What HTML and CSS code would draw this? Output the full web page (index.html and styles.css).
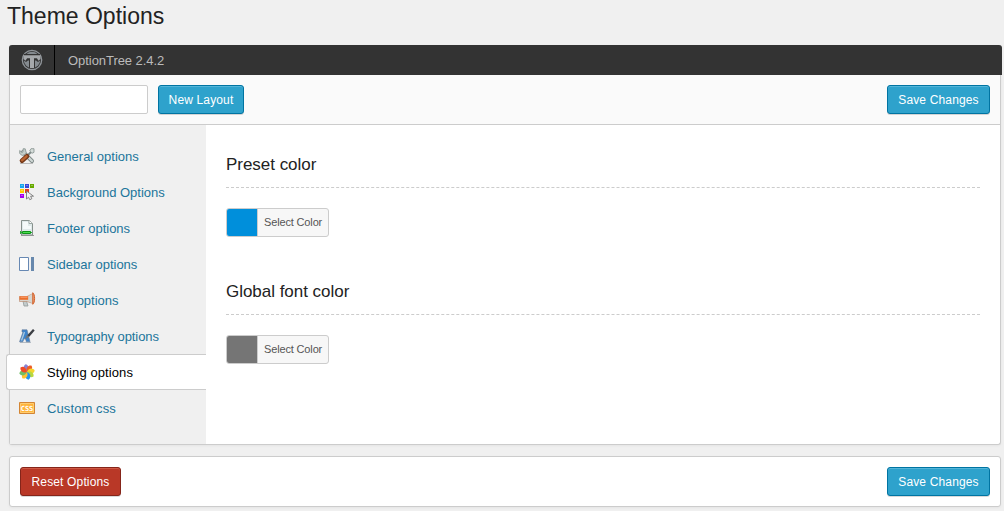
FILE: index.html
```html
<!DOCTYPE html>
<html lang="en">
<head>
<meta charset="utf-8">
<title>Theme Options</title>
<link rel="stylesheet" href="styles.css">
</head>
<body>
<h1 class="page-title">Theme Options</h1>
<form class="panel main-panel">
  <header class="brand-bar">
    <div class="brand-logo">
      <svg width="22" height="22" viewBox="0 0 22 22"><circle cx="11" cy="11" r="9.700" fill="#333" stroke="#8f9499" stroke-width="1.300"/><circle cx="11" cy="11" r="8.200" fill="#858b90"/><path d="M3 5h16v6.500l-2 1.500-2-1.500h-1V19H8v-7.500H7L5 13l-2-1.500z" fill="#333"/><path d="M2.500 6.300h17v3.700l-2 1.700-1.600-2.400H13V19H9V9.300H6.100l-1.600 2.400-2-1.700z" fill="#a5a8ab"/></svg>
    </div>
    <span class="brand-name">OptionTree 2.4.2</span>
  </header>
  <div class="toolbar">
    <input class="layout-input" type="text" aria-label="Layout name">
    <button class="btn btn-primary btn-layout" type="button">New Layout</button>
    <button class="btn btn-primary btn-save" type="button">Save Changes</button>
  </div>
  <div class="panel-body">
    <nav class="tabs">
      <a class="tab"><svg class="icon" viewBox="0 0 16 16"><path d="M1 15.500h13" stroke="#bbb" stroke-width="1"/><path d="M4 4l9 9" stroke="#7e8987" stroke-width="4" stroke-linecap="round"/><path d="M4 4l9 9" stroke="#d0d8d6" stroke-width="2.200" stroke-linecap="round"/><path d="M.7 2.500v3l2.500 2 3-1 1-2-1-3.700H4v3L3 4.500z" fill="#c4ceca" stroke="#84918e" stroke-width=".8"/><path d="M8 8l5-5" stroke="#7c8785" stroke-width="1.800"/><path d="M12 .7l3 0v3.600l-2 1-2.300-2.300z" fill="#d5dcd9" stroke="#84918e" stroke-width=".8"/><path d="M3 12.700l5-4.500" stroke="#753818" stroke-width="4.600" stroke-linecap="round"/><path d="M3 12.300l4.500-4" stroke="#ba6532" stroke-width="2.400" stroke-linecap="round"/></svg><span>General options</span></a>
      <a class="tab"><svg class="icon" viewBox="0 0 16 16"><path d="M1 0h4v4H1z" fill="#16a6ed"/><path d="M6 0h4v4H6z" fill="#3648d8"/><path d="M11 0h4v4h-4z" fill="#67a900"/><path d="M1 5h4v4H1z" fill="#fc0"/><path d="M6 5h4v4H6z" fill="#e53920"/><path d="M1 10h4v4H1z" fill="#a800ed"/><path d="M2 1h2v1H2z M7 1h2v1H7z M12 1h2v1h-2z M2 6h2v1H2z M2 11h2v1H2z" fill="#fff" opacity=".3"/><path d="M7.500 7v8l2-1.800 1.300 2.500 2-1-1.200-2.500H14.500z" fill="#f2f2f2" stroke="#777" stroke-width=".9"/></svg><span>Background Options</span></a>
      <a class="tab"><svg class="icon" viewBox="0 0 16 16"><path d="M2 15.500h13" stroke="#999"/><path d="M2.500.5h8l3 3V15h-11z" fill="#e0eaea" stroke="#87918d"/><path d="M4 9V2h5v4h3v3z" fill="#f5fafa"/><path d="M10 .5v3h3.500" fill="#fff" stroke="#9ba7a3"/><path d="M3.500 11.500h8v2h-8z" fill="#49df4f" stroke="#109419"/><path d="M4 12.500h7" stroke="#49df4f"/><path d="M1.500 11v3M1.500 12.500h1.500M12 12.500h1" stroke="#2cb035"/></svg><span>Footer options</span></a>
      <a class="tab"><svg class="icon" viewBox="0 0 16 16"><path d="M.5 1.500h9v13h-9z" fill="#fff" stroke="#6788b3"/><path d="M12 1h3v14h-3z" fill="#6788ad"/></svg><span>Sidebar options</span></a>
      <a class="tab"><svg class="icon" viewBox="0 0 16 16"><path d="M4 9h3.500l1.500 5H5z" fill="#c4cbcb" stroke="#929b9b" stroke-width=".8"/><path d="M.5 4.500H8l6-3v10L8 9.500H.5z" fill="#d9d5cf" stroke="#b78163" stroke-width=".6"/><path d="M.5 4.200H9.500v3.600H.5z" fill="#ec6f2b"/><path d="M1.500 5.200h7" stroke="#f9a375"/><path d="M9.300 4.200L13.500 2v9L9.300 9z" fill="#d5d6d1"/><path d="M13.800.7c2.400 1.700 2.400 10 0 11.600z" fill="#e8a078" stroke="#d4622b"/></svg><span>Blog options</span></a>
      <a class="tab"><svg class="icon" viewBox="0 0 16 16"><path d="M1 14.500h11" stroke="#b5bdc5"/><path d="M3 1.800h5l3 12H7.300l-.7-3H5l-1.200 3H.5L4 4H3z" fill="#3c83cb" stroke="#647a96" stroke-width=".6"/><path d="M2.500 12.500L5.500 4" stroke="#a9c9e0" stroke-width="1.300"/><path d="M7.500 9.500l1.500-3L14 1l1.700 1.500-5.200 6z" fill="#3c3f44"/><path d="M6 11.500l1.700-4.500 2.800 1.700z" fill="#6c747c"/></svg><span class="tight">Typography options</span></a>
      <a class="tab tab-active"><svg class="icon" viewBox="0 0 16 16"><path d="M8 8C3.500 6 4 2 6.500.3 9.800 1 10.500 4 8 8z" fill="#8983d2"/><path d="M8 8C3.500 6 4 2 6.500.3 9.800 1 10.500 4 8 8z" fill="#ed5e26" transform="rotate(45 8 8)"/><path d="M8 8C3.500 6 4 2 6.500.3 9.800 1 10.500 4 8 8z" fill="#f5d52e" transform="rotate(90 8 8)"/><path d="M8 8C3.500 6 4 2 6.500.3 9.800 1 10.500 4 8 8z" fill="#b9d83d" transform="rotate(135 8 8)"/><path d="M8 8C3.500 6 4 2 6.500.3 9.800 1 10.500 4 8 8z" fill="#2796eb" transform="rotate(180 8 8)"/><path d="M8 8C3.500 6 4 2 6.500.3 9.800 1 10.500 4 8 8z" fill="#ffc32e" transform="rotate(225 8 8)"/><path d="M8 8C3.500 6 4 2 6.500.3 9.800 1 10.500 4 8 8z" fill="#72bf68" transform="rotate(270 8 8)"/><path d="M8 8C3.500 6 4 2 6.500.3 9.800 1 10.500 4 8 8z" fill="#ee4c28" transform="rotate(315 8 8)"/></svg><span class="loose">Styling options</span></a>
      <a class="tab"><svg class="icon" viewBox="0 0 16 16"><path d="M.5 2.500h15v11H.5z" fill="#ffb43b" stroke="#d38534"/><path d="M1.500 3.500h13v9h-13z" fill="none" stroke="#ffcd70"/><text class="css-label" x="8" y="10.800" text-anchor="middle">CSS</text></svg><span class="loose">Custom css</span></a>
    </nav>
    <main class="settings">
      <section class="setting">
        <h2 class="setting-title">Preset color</h2>
        <button class="color-picker" type="button"><span class="swatch swatch-blue"></span><span class="picker-label">Select Color</span></button>
      </section>
      <section class="setting">
        <h2 class="setting-title">Global font color</h2>
        <button class="color-picker" type="button"><span class="swatch swatch-gray"></span><span class="picker-label">Select Color</span></button>
      </section>
    </main>
  </div>
</form>
<footer class="panel footer-panel">
  <button class="btn btn-danger" type="button">Reset Options</button>
  <button class="btn btn-primary btn-save" type="button">Save Changes</button>
</footer>
</body>
</html>
```
FILE: styles.css
```css
* {
  box-sizing: border-box;
}

body {
  margin: 0;
  padding: 0 3px 0 9px;
  height: 511px;
  overflow: hidden;
  background: #f0f0f0;
  font-family: "Liberation Sans", Arial, sans-serif;
  font-size: 13px;
  color: #222;
}

.page-title {
  height: 45px;
  margin: 0 0 0 -2px;
  padding-top: 2px;
  font-size: 23px;
  font-weight: 400;
  line-height: 29px;
}

.panel {
  width: 992px;
  border: 1px solid #ccc;
  border-radius: 3px;
  background: #fff;
  box-shadow: 0 1px 3px rgba(0, 0, 0, .05);
}

.main-panel {
  height: 400px;
  border-top: 0;
}

.brand-bar {
  display: flex;
  height: 30px;
  margin: 0 -2px 0 -1px;
  border-radius: 3px 3px 0 0;
  background: #333;
  color: #bbb;
  line-height: 31px;
}

.brand-logo {
  width: 46px;
  padding: 4px 0 0 12px;
  border-right: 1px solid #000;
}

.brand-logo svg {
  display: block;
}

.brand-name {
  padding-left: 13px;
  letter-spacing: -.05px;
}

.toolbar {
  display: flex;
  height: 50px;
  padding: 10px 10px 0;
  border-bottom: 1px solid #ccc;
  background: #fafafa;
}

.layout-input {
  width: 128px;
  height: 29px;
  margin: 0 10px 0 0;
  border: 1px solid #ccc;
  border-radius: 2px;
  background: #fff;
}

.btn {
  height: 29px;
  padding: 1px 0 0;
  border: 1px solid;
  border-radius: 3px;
  font-family: inherit;
  font-size: 12px;
  line-height: 26px;
  letter-spacing: .15px;
  color: #fff;
}

.btn-primary {
  border-color: #0074a2;
  background: #2ea2cc;
  box-shadow: inset 0 1px 0 rgba(120, 200, 230, .5), 0 1px 0 rgba(0, 0, 0, .15);
}

.btn-layout {
  width: 86px;
}

.btn-save {
  width: 103px;
  margin-left: auto;
}

.btn-danger {
  width: 101px;
  border-color: #85251a;
  background: #b93827;
  box-shadow: inset 0 1px 0 rgba(230, 120, 100, .5), 0 1px 0 rgba(0, 0, 0, .15);
}

.panel-body {
  display: flex;
  height: 319px;
}

.tabs {
  width: 196px;
  padding-top: 13px;
  background: #f0f0f0;
}

.tab {
  display: flex;
  align-items: center;
  height: 36px;
  padding-left: 9px;
  color: #21759b;
}

.tight {
  letter-spacing: -.09px;
}

.loose {
  letter-spacing: .1px;
}

.icon {
  flex: none;
  width: 16px;
  height: 16px;
  margin-right: 12px;
  overflow: visible;
}

.css-label {
  font-family: "DejaVu Sans Mono", monospace;
  font-size: 7px;
  font-weight: 700;
  fill: #fff;
}

.tab-active {
  margin-left: -4px;
  padding-left: 12px;
  border: 1px solid #ccc;
  border-right: 0;
  border-radius: 3px 0 0 3px;
  background: #fff;
  color: #000;
}

.settings {
  flex: 1;
  padding: 28px 20px 0;
}

.setting {
  height: 127px;
}

.setting-title {
  height: 35px;
  margin: 0 0 20px;
  border-bottom: 1px dashed #ccc;
  font-size: 17px;
  font-weight: 400;
  line-height: 23px;
  letter-spacing: -.03px;
}

.color-picker {
  display: flex;
  width: 103px;
  height: 29px;
  padding: 0;
  border: 1px solid #ccc;
  border-radius: 3px;
  overflow: hidden;
  background: #f7f7f7;
  color: #555;
  font-family: inherit;
  font-size: 11px;
  line-height: 27px;
}

.swatch {
  width: 30px;
  height: 27px;
}

.swatch-blue {
  background: #008fdb;
}

.swatch-gray {
  background: #757575;
}

.picker-label {
  flex: 1;
  padding-left: 6px;
  border-left: 1px solid #ccc;
  text-align: left;
  letter-spacing: -.15px;
  white-space: nowrap;
}

.footer-panel {
  display: flex;
  height: 51px;
  margin-top: 11px;
  padding: 10px 10px 0;
}
```
